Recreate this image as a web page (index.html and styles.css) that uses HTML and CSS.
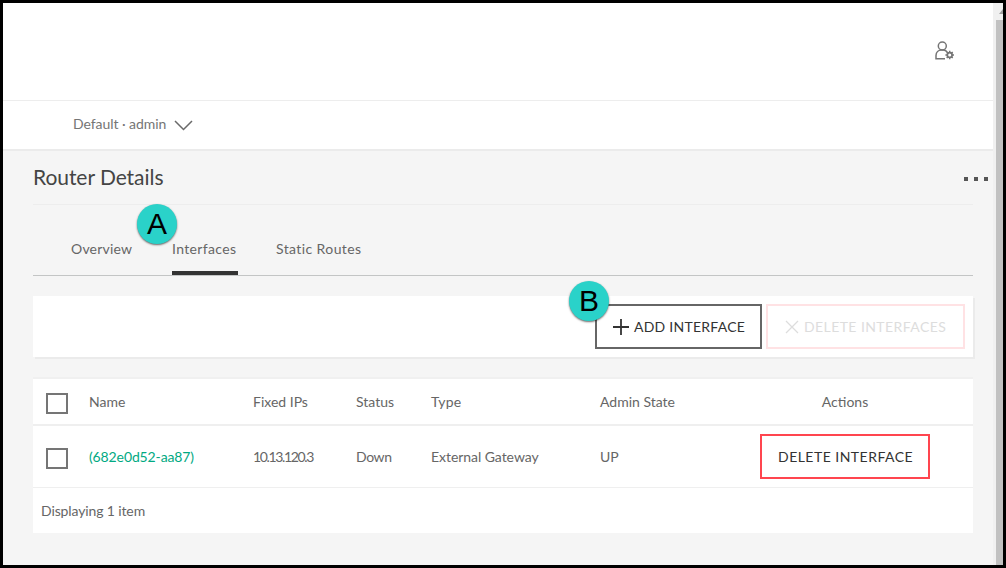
FILE: index.html
```html
<!DOCTYPE html>
<html lang="en">
<head>
<meta charset="utf-8">
<title>Router Details</title>
<link rel="stylesheet" href="styles.css">
</head>
<body>
<div class="frame">
  <div class="page">
    <header class="masthead">
      <svg class="user-icon" width="20" height="20" viewBox="0 0 20 20" fill="none" stroke="#757575" stroke-width="1.5">
        <circle cx="7.3" cy="5" r="4"/>
        <path d="M10 17.8H1v-3.3C1 11 3.5 9 6.5 9h1.6c2 0 3.2.8 4 2"/>
        <circle cx="14.7" cy="14" r="2.4" stroke-width="1.7"/>
        <path d="M14.7 9.8v2M14.7 16.3v2M10.4 14h2M17 14h2M11.7 11l1.4 1.4M16.3 15.6l1.4 1.4M17.7 11l-1.4 1.4M13.1 15.6l-1.4 1.4"/>
      </svg>
    </header>
    <nav class="context">
      <span class="project">Default · admin</span>
      <svg class="chevron" width="19" height="11" viewBox="0 0 19 11" fill="none" stroke="#6a6a6a" stroke-width="1.5"><path d="M1 1l8.5 8.5L18 1"/></svg>
    </nav>
    <main class="content">
      <div class="title-row">
        <h1>Router Details</h1>
        <span class="more"><i></i><i></i><i></i></span>
      </div>
      <div class="tabs">
        <span class="tab overview">Overview</span>
        <span class="tab active">Interfaces</span>
        <span class="tab routes">Static Routes</span>
        <span class="marker marker-a">A</span>
      </div>
      <div class="toolbar">
        <button class="btn add">
          <svg width="16" height="16" viewBox="0 0 16 16" fill="none" stroke="#333" stroke-width="1.8"><path d="M8 0v16M0 8h16"/></svg>
          <span>ADD INTERFACE</span>
        </button>
        <button class="btn remove" disabled>
          <svg width="14" height="14" viewBox="0 0 14 14" fill="none" stroke="#ddd" stroke-width="1.3"><path d="M1 1l12 12M13 1L1 13"/></svg>
          <span>DELETE INTERFACES</span>
        </button>
        <span class="marker marker-b">B</span>
      </div>
      <div class="table">
        <div class="row head">
          <span class="check"></span>
          <span>Name</span>
          <span>Fixed IPs</span>
          <span>Status</span>
          <span class="type">Type</span>
          <span>Admin State</span>
          <span class="actions">Actions</span>
        </div>
        <div class="row item">
          <span class="check"></span>
          <a class="link">(682e0d52-aa87)</a>
          <span class="ip">10.13.120.3</span>
          <span class="down">Down</span>
          <span class="gateway">External Gateway</span>
          <span>UP</span>
          <span class="actions"><button class="btn danger">DELETE INTERFACE</button></span>
        </div>
        <div class="footer">Displaying 1 item</div>
      </div>
    </main>
  </div>
  <div class="scrollbar">
    <svg class="arrow" width="7" height="17" viewBox="0 0 7 17"><path d="M3 11l4-5v5z" fill="#a0a0a0"/></svg>
    <div class="thumb"></div>
  </div>
</div>
</body>
</html>
```
FILE: styles.css
```css
* { box-sizing: border-box; }
body {
  margin: 0;
  font: 14px/20px Lato, "Open Sans", sans-serif;
  color: #666;
}
.frame {
  display: flex;
  width: 1006px;
  height: 568px;
  border: 3px solid #000;
  background: #f5f5f5;
  overflow: hidden;
}
.page { flex: 1; min-width: 0; }
.masthead {
  display: flex;
  justify-content: flex-end;
  height: 98px;
  padding: 38px 38px 0 0;
  background: #fff;
  border-bottom: 1px solid #ededed;
}
.context {
  display: flex;
  align-items: center;
  gap: 8px;
  height: 50px;
  padding-left: 70px;
  background: #fff;
  border-bottom: 2px solid #ebebeb;
  color: #757575;
}
.project {
  width: 93px;
  padding-bottom: 2px;
  white-space: nowrap;
  letter-spacing: -.06px;
}
.content { padding: 0 20px 0 30px; }
.title-row {
  display: flex;
  align-items: center;
  justify-content: space-between;
  height: 54px;
  border-bottom: 1px solid #ededed;
}
h1 {
  margin: 0;
  padding-bottom: 2px;
  font-size: 21px;
  line-height: 28px;
  font-weight: 400;
  letter-spacing: -.05px;
  color: #444;
}
.more { display: flex; gap: 6px; margin: 2px -15px 0 0; }
.more i { width: 4px; height: 4px; background: #555; }
.tabs {
  position: relative;
  display: flex;
  height: 71px;
  padding-left: 38px;
  border-bottom: 1px solid #c3c5c5;
}
.tab {
  display: block;
  padding-top: 34px;
  white-space: nowrap;
  letter-spacing: .4px;
}
.tab.overview { width: 101px; letter-spacing: .2px; }
.tab.active {
  width: 66px;
  margin-right: 38px;
  border-bottom: 4px solid #333;
  letter-spacing: .35px;
}
.marker {
  position: absolute;
  display: flex;
  align-items: center;
  justify-content: center;
  width: 40px;
  height: 40px;
  border-radius: 50%;
  background: #2ad2c9;
  box-shadow: 0 1px 2px rgba(0, 0, 0, .6);
  color: #000;
  font: 30px/40px "Liberation Sans", Arial, sans-serif;
}
.marker-a { left: 104px; top: -1px; }
.marker-b { left: 536px; top: -15px; }
.toolbar {
  position: relative;
  display: flex;
  justify-content: flex-end;
  gap: 4px;
  margin-top: 20px;
  height: 61px;
  padding: 8px 8px 0 0;
  background: #fff;
  box-shadow: 2px 2px 0 #ebebeb;
}
.btn {
  display: flex;
  align-items: center;
  height: 45px;
  padding: 0 0 0 16px;
  background: #fff;
  border: 2px solid #666;
  color: #333;
  font: 14px/20px Lato, "Open Sans", sans-serif;
  letter-spacing: .48px;
  white-space: nowrap;
}
.add { width: 167px; gap: 5px; letter-spacing: .25px; }
.remove {
  width: 199px;
  padding-left: 17px;
  gap: 5px;
  border-color: #ffe2e4;
  color: #ddd;
  letter-spacing: .42px;
}
.danger { width: 170px; border-color: #ff454f; }
.table { margin-top: 20px; border-top: 2px solid #f0f0f0; background: #fff; }
.row {
  display: grid;
  grid-template-columns: 43px 164px 103px 75px 169px 117px 256px;
  align-items: center;
  padding-left: 13px;
  white-space: nowrap;
}
.head { height: 47px; border-bottom: 2px solid #efefef; }
.item { height: 62px; border-bottom: 1px solid #efefef; }
.check { width: 22px; height: 21px; border: 2px solid #757575; margin-top: 3px; }
.type { letter-spacing: .2px; }
.link { color: #01a982; letter-spacing: -.12px; }
.ip { letter-spacing: -1.35px; }
.down { letter-spacing: -.4px; }
.gateway { letter-spacing: -.05px; }
.actions { display: flex; justify-content: center; }
.footer { height: 45px; padding: 13px 0 0 8px; letter-spacing: -.12px; }
.scrollbar { width: 10px; background: #f0f0f0; }
.arrow { display: block; margin-left: 3px; }
.thumb { height: 545px; margin-left: 3px; background: #c1c1c1; }
```
